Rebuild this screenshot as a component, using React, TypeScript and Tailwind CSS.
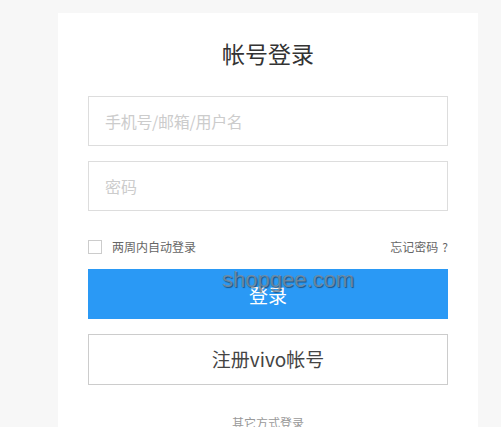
import React from "react";

export default function App() {
  return (
    <div
      className="relative min-h-[427px] w-full overflow-hidden bg-[#f7f7f7]"
      style={{ fontFamily: '"Noto Sans CJK SC", "Noto Sans", sans-serif' }}
    >
      <div className="ml-[58px] mt-[13px] h-[460px] w-[420px] bg-white px-[30px]">
        <div className="pt-[27px] text-center text-[23px] leading-[26px] text-[#333]">帐号登录</div>
        <div className="mt-[30px] flex h-[50px] w-[360px] items-center border border-[#ddd] px-[16px] text-[16px] tracking-[-0.3px] text-[#ccc]">
          手机号/邮箱/用户名
        </div>
        <div className="mt-[15px] flex h-[50px] w-[360px] items-center border border-[#ddd] px-[16px] text-[16px] text-[#ccc]">
          密码
        </div>
        <div className="mt-[29px] flex h-[14px] w-[360px] items-center justify-between text-[12px] leading-[14px] text-[#666]">
          <div className="flex items-center">
            <span className="block h-[14px] w-[14px] border border-[#ccc] bg-white"></span>
            <span className="ml-[10px]">两周内自动登录</span>
          </div>
          <span>
            忘记密码<span className="ml-[4px]">?</span>
          </span>
        </div>
        <div className="mt-[15px] flex h-[50px] w-[360px] items-center justify-center bg-[#2a99f5] pt-[2px] text-[19px] text-white">
          登录
        </div>
        <div className="mt-[15px] flex h-[51px] w-[360px] items-center justify-center border border-[#ccc] text-[19px] text-[#444]">
          注册vivo帐号
        </div>
        <div className="mt-[30px] text-center text-[12px] leading-[16px] text-[#999]">其它方式登录</div>
      </div>
      <div
        className="absolute left-[222px] top-[269px] text-[22px] leading-none text-[#7f8c99]/80 [text-shadow:1px_1px_1px_rgba(0,0,0,0.45)]"
        style={{ fontFamily: '"Liberation Sans", Arial, sans-serif' }}
      >
        shopgee.com
      </div>
    </div>
  );
}
